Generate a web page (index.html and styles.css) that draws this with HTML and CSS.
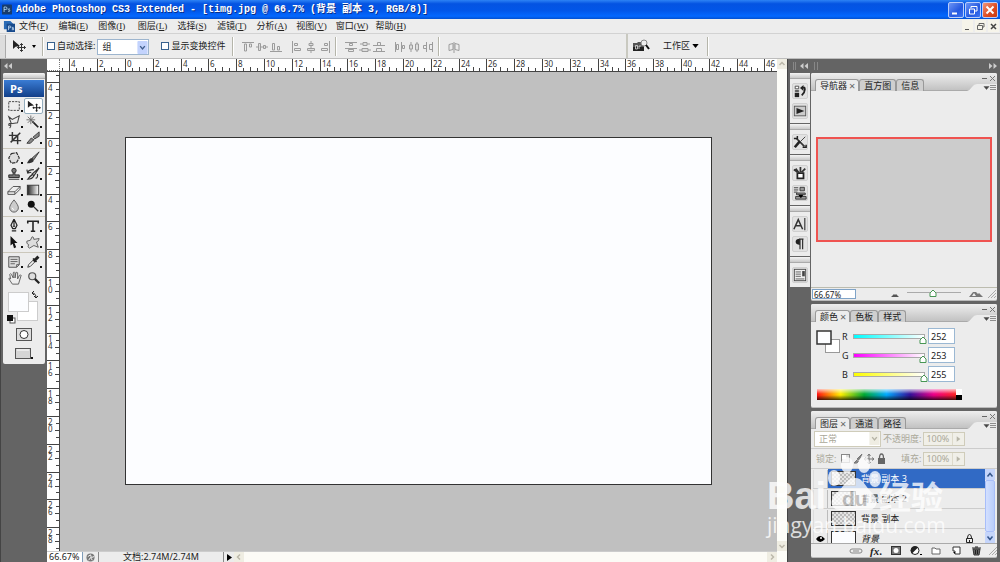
FILE: index.html
```html
<!DOCTYPE html>
<html lang="zh-CN">
<head>
<meta charset="utf-8">
<title>Adobe Photoshop CS3 Extended</title>
<link rel="stylesheet" href="styles.css">
</head>
<body>
<header class="titlebar">
  <svg class="app-icon" viewBox="0 0 12 12"><rect width="12" height="12" rx="1" fill="#173c6d"/><path d="M2.500 9V3h2q1.500 0 1.500 1.500T4.500 6h-2M9.500 5.500q-2-.8-2 .4c0 1 2 .6 2 1.700q0 1-2.200.5" fill="none" stroke="#b9dcf5"/></svg>
  <h1 class="title">Adobe Photoshop CS3 Extended - [timg.jpg @ 66.7% (背景 副本 3, RGB/8)]</h1>
  <div class="win-buttons">
    <button class="win-btn" aria-label="最小化"><svg viewBox="0 0 14 14"><path d="M3 10.500h5" stroke="#fff" stroke-width="2"/></svg></button>
    <button class="win-btn" aria-label="还原"><svg viewBox="0 0 14 14"><path d="M5 5V3.500h6V8H9M3.500 6h5v5h-5zM5 3.500h6" fill="none" stroke="#fff"/></svg></button>
    <button class="win-btn close" aria-label="关闭"><svg viewBox="0 0 14 14"><path d="M3.500 3.500l7 7m0-7l-7 7" stroke="#fff" stroke-width="2"/></svg></button>
  </div>
</header>
<nav class="menubar">
  <svg class="doc-icon" viewBox="0 0 13 13"><path d="M1 1h7l3 3v6H1z" fill="#2b6bb5"/><rect x="4" y="4" width="9" height="9" fill="#174a8c"/><path d="M6 11V6.500h1.500q1 0 1 1t-1 1H6M11.500 8h-1.500v1.200h1.500v1.300h-2" fill="none" stroke="#d5eaff" stroke-width=".8"/></svg>
  <div class="menus">
    <button>文件(<u>F</u>)</button><button>编辑(<u>E</u>)</button><button>图像(<u>I</u>)</button><button>图层(<u>L</u>)</button><button>选择(<u>S</u>)</button><button>滤镜(<u>T</u>)</button><button>分析(<u>A</u>)</button><button>视图(<u>V</u>)</button><button>窗口(<u>W</u>)</button><button>帮助(<u>H</u>)</button>
  </div>
  <div class="doc-buttons">
    <button aria-label="最小化文档"><svg viewBox="0 0 11 11"><path d="M3 8.500h4" stroke="#555"/></svg></button>
    <button aria-label="还原文档"><svg viewBox="0 0 11 11"><path d="M4 4V2.500h5V6H7.500M2.500 4.500h5v4h-5z" fill="none" stroke="#666"/></svg></button>
    <button aria-label="关闭文档"><svg viewBox="0 0 11 11"><path d="M3 3l5 5m0-5L3 8" stroke="#444" stroke-width="1.500"/></svg></button>
  </div>
</nav>
<div class="options">
  <span class="opt-grip"></span>
  <button class="opt-tool" aria-label="移动工具"><svg width="26" height="16" viewBox="0 0 26 16"><path d="M2 2v9l2.500-2.300L9 8z" fill="#222"/><path d="M10.500 5.500v8M6.500 9.500h8M9 7l1.500-1.500L12 7M9 12l1.500 1.500L12 12M8 8L6.500 9.500 8 11M13 8l1.500 1.500L13 11" fill="none" stroke="#333"/><path d="M21 7h4l-2 3z"/></svg></button>
  <span class="opt-sep"></span>
  <label class="check"><input type="checkbox">自动选择:</label>
  <span class="select-box group-select"><select aria-label="自动选择"><option>组</option><option>图层</option></select><svg viewBox="0 0 11 14"><rect width="11" height="14" rx="1" fill="#c3d3fd"/><path d="M3 5.500l2.500 3 2.500-3" fill="none" stroke="#3f5d8c" stroke-width="1.500"/></svg></span>
  <label class="check show-check"><input type="checkbox">显示变换控件</label>
  <span class="opt-sep"></span>
  <div class="align-set">
    <button aria-label="顶对齐"><svg viewBox="0 0 12 12"><path d="M0 1.500h12"/><path d="M2.500 3v7h2V3zM7.500 3v3h2V3z"/></svg></button>
    <button aria-label="垂直居中对齐"><svg viewBox="0 0 12 12"><path d="M0 6h12"/><path d="M2.500 2.500h2v7h-2zM7.500 4.500h2v3h-2z" fill="#ddd"/></svg></button>
    <button aria-label="底对齐"><svg viewBox="0 0 12 12"><path d="M0 10.500h12M2.500 2.500h2V9h-2zM7.500 5.500h2V9h-2z"/></svg></button>
  </div>
  <div class="align-set">
    <button aria-label="左对齐"><svg viewBox="0 0 12 12"><path d="M1.500 0v12M3.500 2.500h3v2h-3zM3.500 7.500h6v2h-6z"/></svg></button>
    <button aria-label="水平居中对齐"><svg viewBox="0 0 12 12"><path d="M6 0v12"/><path d="M4 2.500h4v2H4zM2.500 7.500h7v2h-7z" fill="#ddd"/></svg></button>
    <button aria-label="右对齐"><svg viewBox="0 0 12 12"><path d="M10.500 0v12M5.500 2.500h3v2h-3zM2.500 7.500h6v2h-6z"/></svg></button>
  </div>
  <span class="opt-sep"></span>
  <div class="align-set">
    <button aria-label="按顶分布"><svg viewBox="0 0 12 12"><path d="M0 1.500h12M0 7.500h12M4.500 2.500h3v2h-3zM3.500 8.500h5v2h-5z"/></svg></button>
    <button aria-label="垂直居中分布"><svg viewBox="0 0 12 12"><path d="M1 3h10M0 9h12"/><path d="M4 1.500h4v3H4zM3 7.500h6v3H3z" fill="#ddd"/></svg></button>
    <button aria-label="按底分布"><svg viewBox="0 0 12 12"><path d="M0 4.500h12M0 10.500h12M4.500 1.500h3v3h-3zM3.500 7.500h5v3h-5z"/></svg></button>
  </div>
  <div class="align-set">
    <button aria-label="按左分布"><svg viewBox="0 0 12 12"><path d="M1.500 1v10M7.500 1v10M2.500 3.500h2v5h-2zM8.500 4.500h2v3h-2z"/></svg></button>
    <button aria-label="水平居中分布"><svg viewBox="0 0 12 12"><path d="M3 1v10M9 1v10"/><path d="M1.500 4h3v4h-3zM7.500 3h3v6h-3z" fill="#ddd"/></svg></button>
    <button aria-label="按右分布"><svg viewBox="0 0 12 12"><path d="M4.500 1v10M10.500 1v10M1.500 4.500h3v3h-3zM7.500 3.500h3v5h-3z"/></svg></button>
  </div>
  <span class="opt-sep"></span>
  <div class="align-set">
    <button aria-label="自动对齐图层"><svg viewBox="0 0 12 12"><path d="M6 1v11M1 3.500l4-1v6l-4 1zM11 3.500l-4-1v6l4 1z"/></svg></button>
  </div>
  <div class="workspace">
    <button aria-label="转到 Bridge"><svg width="18" height="14" viewBox="0 0 18 14"><path d="M1 4h4l1-1h6v9H1z" fill="#555"/><path d="M1 8h11v4H1z" fill="#222"/><path d="M3.500 10V6.500h2v3.500zM7 10V7h2" fill="none" stroke="#ddd" stroke-width=".8"/><circle cx="12" cy="4" r="3" fill="#eee" stroke="#888"/><path d="M14 6l3 4" stroke="#111" stroke-width="2"/></svg></button>
    <button class="ws-menu">工作区 <svg width="7" height="4" viewBox="0 0 8 5"><path d="M0 0h8L4 5z"/></svg></button>
  </div>
  <span class="opt-sep"></span>
</div>

<main class="work">
  <aside class="left-dock">
    <div class="dock-top"><svg width="8" height="6" viewBox="0 0 8 6"><path d="M3.500 0v6L0 3zM8 0v6L4.500 3z" fill="#ccc"/></svg></div>
    <div class="tools">
      <div class="grip"></div>
      <div class="ps-logo">Ps</div>
      <div class="tool-group">
        <button class="more" aria-label="矩形选框"><svg viewBox="0 0 16 16"><rect x="2" y="3" width="12" height="10" fill="none" stroke="#333" stroke-dasharray="2.500 1.200"/></svg></button>
        <button class="active" aria-label="移动"><svg viewBox="0 0 16 16"><path d="M1 2v8l2.500-2L8 7.500z" fill="#222"/><path d="M11 6v8M7 10h8M10 7l1-1 1 1M10 13l1 1 1-1M8 9l-1 1 1 1M14 9l1 1-1 1" fill="none" stroke="#222" stroke-width="1.300"/></svg></button>
        <button class="more" aria-label="套索"><svg viewBox="0 0 16 16"><path d="M2 2l4 3 8-4-2 8-7 1zM5 10q-3-1-3 1t2 0q1 2-1 4" fill="none" stroke="#444" stroke-width="1.200"/></svg></button>
        <button class="more" aria-label="魔棒"><svg viewBox="0 0 16 16"><path d="M7 7l7 7" stroke="#222" stroke-width="2"/><path d="M5.500 .5v10M.5 5.500h10M2 2l7 7M9 2L2 9" stroke="#666"/></svg></button>
        <button aria-label="裁剪"><svg viewBox="0 0 16 16"><path d="M5 1v10h10M1 5h10v10M3 13L14 2" fill="none" stroke="#333" stroke-width="1.700"/></svg></button>
        <button class="more" aria-label="切片"><svg viewBox="0 0 16 16"><path d="M1 14l5-6 3 2-4 4zM8 7l7-6v5L10 9z" fill="#888" stroke="#333"/></svg></button>
      </div>
      <div class="tool-group">
        <button class="more" aria-label="修补"><svg viewBox="0 0 16 16"><path d="M5 3l6-1 3 6-3 5-6 1-3-6z" fill="#ddd" stroke="#333" stroke-width="1.300" stroke-dasharray="4 1"/></svg></button>
        <button class="more" aria-label="画笔"><svg viewBox="0 0 16 16"><path d="M15 1L7 8l2 2z" fill="#888" stroke="#333"/><path d="M7 8q-3 0-6 6 6 0 8-3z" fill="#333"/></svg></button>
        <button class="more" aria-label="图章"><svg viewBox="0 0 16 16"><circle cx="8" cy="4" r="2.500" fill="#777" stroke="#222"/><path d="M7 6v3H2v3h12V9H9V6M2 14h12" fill="#777" stroke="#222"/></svg></button>
        <button class="more" aria-label="历史画笔"><svg viewBox="0 0 16 16"><path d="M15 1L7 8l2 2zM7 9q-2 1-5 5 5 0 7-4M2 7q0-4 7-4M1 3l1 4 4-1M11 13q3-1 2-5" fill="none" stroke="#333" stroke-width="1.400"/></svg></button>
        <button class="more" aria-label="橡皮擦"><svg viewBox="0 0 16 16"><path d="M1 10l6-6h8l-6 6zM1 10v3h8l6-6V4M9 10v3" fill="#eee" stroke="#444"/></svg></button>
        <button class="more" aria-label="渐变"><svg viewBox="0 0 16 16"><defs><linearGradient id="tone"><stop stop-color="#222"/><stop offset="1" stop-color="#fff"/></linearGradient></defs><rect x="1.500" y="2.500" width="13" height="11" fill="url(#tone)" stroke="#333"/></svg></button>
        <button class="more" aria-label="模糊"><svg viewBox="0 0 16 16"><path d="M8 1q-5 6-5 9a5 5 0 0010 0q0-3-5-9z" fill="#ccc" stroke="#555"/><path d="M6 10q0 2 2 2" stroke="#fff" fill="none"/></svg></button>
        <button class="more" aria-label="减淡"><svg viewBox="0 0 16 16"><circle cx="6" cy="6" r="4" fill="#111"/><path d="M9 9l5 5" stroke="#333" stroke-width="1.500"/></svg></button>
      </div>
      <div class="tool-group">
        <button class="more" aria-label="钢笔"><svg viewBox="0 0 16 16"><path d="M8 0L4.500 7l2 4h3l2-4zM8 1v6M5.500 13.500h5" fill="#ddd" stroke="#222" stroke-width="1.300"/><circle cx="8" cy="8" r="1"/></svg></button>
        <button class="more" aria-label="文字"><svg viewBox="0 0 16 16"><path d="M2 5V2.500h12V5M8 2v12M5.500 14h5" fill="none" stroke="#222" stroke-width="1.800"/></svg></button>
        <button class="more" aria-label="路径选择"><svg viewBox="0 0 16 16"><path d="M4 1v11l2.500-2L8 15l2.500-1-2-5H12z" fill="#111"/></svg></button>
        <button class="more" aria-label="形状"><svg viewBox="0 0 16 16"><path d="M5 6l2-4q2 0 2 3l6-1q0 3-3 4l2 6-5-2-5 3q-3-1-1-4-3-1-2-4z" fill="#ddd" stroke="#555"/></svg></button>
      </div>
      <div class="tool-group">
        <button class="more" aria-label="注释"><svg viewBox="0 0 16 16"><path d="M2 2h12v9l-3 3H2z" fill="#ddd" stroke="#444"/><path d="M4 5h8M4 7.500h8M4 10h5M14 11h-3v3" fill="none" stroke="#555"/></svg></button>
        <button class="more" aria-label="吸管"><svg viewBox="0 0 16 16"><path d="M2 14l1-3 5-5 2 2-5 5z" fill="#eee" stroke="#333"/><path d="M8 4l4 4M9 6l4-4 1 1-4 4z" stroke="#222" stroke-width="2"/></svg></button>
        <button aria-label="抓手"><svg viewBox="0 0 16 16"><path d="M5 15L1 9q0-2 2 0L2 4q1-2 2 0l2 4V2q1-2 2 0v6l1-6q1-1 2 0v7l2-4q2-1 2 0l-3 10z" fill="#eee" stroke="#555"/></svg></button>
        <button aria-label="缩放"><svg viewBox="0 0 16 16"><circle cx="6" cy="6" r="4" fill="#ddd" stroke="#555" stroke-width="1.400"/><path d="M9 9l5 5" stroke="#222" stroke-width="2.500"/></svg></button>
      </div>
      <svg class="swatches" viewBox="0 0 41 36"><rect x="14.500" y="13.500" width="20" height="19" fill="#fff" stroke="#ccc"/><rect x="5.500" y="4.500" width="20" height="19" fill="#fcfdff" stroke="#ccc"/><path d="M29 5q4 0 4 5M31 3l-2 2 2 2M31 8l2 2 2-2" fill="none" stroke="#222"/><rect x="7" y="30" width="5" height="5" fill="#fff" stroke="#555"/><rect x="4" y="27" width="6" height="6" fill="#111"/></svg>
      <div class="mask-row"><button aria-label="快速蒙版"><svg width="16" height="13" viewBox="0 0 16 13"><rect x=".5" y=".5" width="15" height="12" fill="#ddd" stroke="#555"/><circle cx="8" cy="6.500" r="4" fill="#fff" stroke="#333"/></svg></button></div>
      <div class="mask-row"><button class="more" aria-label="屏幕模式"><svg width="16" height="13" viewBox="0 0 16 13"><rect x=".5" y="1.500" width="15" height="10" fill="#d5d5d5" stroke="#555"/><path d="M2 3h12" stroke="#fff"/></svg></button></div>
    </div>
  </aside>

  <section class="document">
    <div class="ruler-row">
      <span class="ruler-corner"></span>
      <svg class="ruler-h" id="ruler-h"></svg>
    </div>
    <div class="doc-mid">
      <svg class="ruler-v" id="ruler-v"></svg>
      <div class="pasteboard"><div class="canvas"></div></div>
    </div>
    <div class="statusbar">
      <input class="zoom" aria-label="缩放比例" value="66.67%">
      <button class="status-icon" aria-label="Version Cue"><svg viewBox="0 0 10 10"><circle cx="5" cy="5" r="4.500" fill="#777"/><path d="M2 4l3-2 1 3 3-1M3 8l2-3 2 3" stroke="#fff" fill="none"/></svg></button>
      <span class="docsize">文档:2.74M/2.74M</span>
      <button class="status-more" aria-label="状态选项"><svg width="5" height="7" viewBox="0 0 5 7"><path d="M0 0l5 3.500L0 7z"/></svg></button>
      <div class="hscroll"><button aria-label="向左"><svg viewBox="0 0 10 10"><path d="M6 2.500L3.500 5 6 7.500"/></svg></button><button aria-label="向右"><svg viewBox="0 0 10 10"><path d="M4 2.500L6.500 5 4 7.500"/></svg></button></div>
    </div>
  </section>
  <div class="vscroll"><button aria-label="向上"><svg viewBox="0 0 10 10"><path d="M2.500 6L5 3.500 7.500 6"/></svg></button><button aria-label="向下"><svg viewBox="0 0 10 10"><path d="M2.500 4L5 6.500 7.500 4"/></svg></button></div>

  <aside class="icon-dock">
    <div class="dock-top"><i class="handle"></i><svg width="8" height="6" viewBox="0 0 8 6"><path d="M3.500 0v6L0 3zM8 0v6L4.500 3z" fill="#ccc"/></svg></div>
    <div class="icon-group"><div class="grip"></div>
      <button aria-label="历史记录"><svg viewBox="0 0 16 16"><path d="M2.500 2.500h4v3h-4zM2.500 7.500h4v1h-4z" fill="#fff" stroke="#444"/><path d="M2 10h5v5H2z" fill="#222"/><path d="M10 4h3q2 4-3 9" fill="none" stroke="#222" stroke-width="2"/><path d="M8 4.500L12 1v7z" fill="#222"/></svg></button>
      <button aria-label="动作"><svg viewBox="0 0 16 16"><rect x="1.500" y="2.500" width="13" height="11" fill="#ccc" stroke="#555"/><path d="M4 4.500L13 8l-9 3.500z" fill="#222"/></svg></button></div>
    <div class="icon-group"><div class="grip"></div>
      <button aria-label="工具预设"><svg viewBox="0 0 16 16"><path d="M4 4l9 9" stroke="#333" stroke-width="2"/><path d="M14 2L9 7" stroke="#333"/><path d="M8 7l-6 7" stroke="#222" stroke-width="3"/><path d="M1 4h4V1M11 14h4v-3" fill="none" stroke="#222" stroke-width="1.700"/></svg></button></div>
    <div class="icon-group"><div class="grip"></div>
      <button aria-label="画笔"><svg viewBox="0 0 16 16"><path d="M5 8h7v6H5z" fill="#fff" stroke="#222" stroke-width="2"/><path d="M7 8L3 3M8.500 7V1M10 7l4-4M1 4l4 3" stroke="#333" stroke-width="2"/></svg></button>
      <button aria-label="仿制源"><svg viewBox="0 0 16 16"><path d="M1 2h5M1 4.500h5M1 7h4M8 1.500h5v4H8zM4 8h10v2H4zM3 12h12v3H3z" fill="#999" stroke="#333"/><path d="M6 10h6l-3 4z"/></svg></button></div>
    <div class="icon-group"><div class="grip"></div>
      <button aria-label="字符"><svg viewBox="0 0 16 16"><path d="M1 14L6 3l5 11M3 10h6" fill="none" stroke="#333" stroke-width="1.700"/><path d="M13.500 1v14" stroke="#333" stroke-width="1.300"/></svg></button>
      <button aria-label="段落"><svg viewBox="0 0 16 16"><path d="M8 2q-5 0-5 3.500T8 9z" fill="#222"/><path d="M8 2v12M11 2v12M7 2.500h5" stroke="#333" stroke-width="1.400"/></svg></button></div>
    <div class="icon-group"><div class="grip"></div>
      <button aria-label="图层复合"><svg viewBox="0 0 16 16"><rect x="1.500" y="1.500" width="13" height="13" fill="#eee" stroke="#444"/><path d="M3 4.500h6M3 7h6M3 9.500h6M3 12.500h10" stroke="#555"/><path d="M10.500 3.500h3v6h-3z" fill="#444"/></svg></button></div>
  </aside>

  <aside class="panels">
    <div class="dock-top"><i class="handle"></i><svg width="8" height="6" viewBox="0 0 8 6"><path d="M0 0v6l3.500-3zM4.500 0v6L8 3z" fill="#ccc"/></svg></div>
    <section class="panel navigator">
      <div class="panel-head"><div class="tabs"><button class="tab on">导航器<span class="x">×</span></button><button class="tab">直方图</button><button class="tab">信息</button></div>
        <svg class="panel-ctl" viewBox="0 0 34 18"><path d="M19 5.500h5" stroke="#666"/><path d="M27 3l5 5m0-5l-5 5" stroke="#777"/><path d="M4 18q3-1 5-4t5-3h20v7z" fill="#ececec"/><path d="M21 13.500h5l-2.500 3zM27 12.500h6M27 14.500h6M27 16.500h6" fill="#444" stroke="#666" stroke-width=".7"/></svg></div>
      <div class="nav-body"><div class="nav-view"></div></div>
      <div class="nav-foot">
        <input class="nav-zoom" aria-label="导航器缩放" value="66.67%">
        <svg width="8" height="5" viewBox="0 0 8 5"><path d="M0 5l3-3 1 1 1-1 3 3z" fill="#555"/></svg>
        <input class="nav-range" type="range" min="0" max="100" value="47" aria-label="缩放滑块">
        <svg width="14" height="6" viewBox="0 0 14 6"><path d="M0 6l4-5h3l2 2 1-1 4 4z" fill="#777"/><path d="M3 5l2-3 2 3" fill="#eee"/></svg>
        <svg class="resizer" width="8" height="8" viewBox="0 0 8 8"><path d="M0 8l8-8M3 8l5-5M6 8l2-2" stroke="#aaa"/></svg>
      </div>
    </section>
    <section class="panel color">
      <div class="panel-head"><div class="tabs"><button class="tab on">颜色<span class="x">×</span></button><button class="tab">色板</button><button class="tab">样式</button></div>
        <svg class="panel-ctl" viewBox="0 0 34 18"><path d="M19 5.500h5" stroke="#666"/><path d="M27 3l5 5m0-5l-5 5" stroke="#777"/><path d="M4 18q3-1 5-4t5-3h20v7z" fill="#ececec"/><path d="M21 13.500h5l-2.500 3zM27 12.500h6M27 14.500h6M27 16.500h6" fill="#444" stroke="#666" stroke-width=".7"/></svg></div>
      <div class="color-body">
        <svg class="fg-bg" viewBox="0 0 26 26"><rect x="9.500" y="11.500" width="14" height="13" fill="#fff" stroke="#999"/><rect x="1" y="3" width="14" height="13" fill="#fcfdff" stroke="#333" stroke-width="1.500"/></svg>
        <div class="channels">
          <div class="channel"><label for="r">R</label><input id="r" class="range-r" type="range" max="255" value="252"><input aria-label="R 数值" class="num" value="252"></div>
          <div class="channel"><label for="g">G</label><input id="g" class="range-g" type="range" max="255" value="253"><input aria-label="G 数值" class="num" value="253"></div>
          <div class="channel"><label for="b">B</label><input id="b" class="range-b" type="range" max="255" value="255"><input aria-label="B 数值" class="num" value="255"></div>
        </div>
      </div>
      <div class="spectrum"><span class="rainbow"></span><span class="bw"></span></div>
    </section>
    <section class="panel layers">
      <div class="panel-head"><div class="tabs"><button class="tab on">图层<span class="x">×</span></button><button class="tab">通道</button><button class="tab">路径</button></div>
        <svg class="panel-ctl" viewBox="0 0 34 18"><path d="M19 5.500h5" stroke="#666"/><path d="M27 3l5 5m0-5l-5 5" stroke="#777"/><path d="M4 18q3-1 5-4t5-3h20v7z" fill="#ececec"/><path d="M21 13.500h5l-2.500 3zM27 12.500h6M27 14.500h6M27 16.500h6" fill="#444" stroke="#666" stroke-width=".7"/></svg></div>
      <div class="layer-opts">
        <span class="select-box mode-select"><select aria-label="混合模式" disabled><option>正常</option></select><svg viewBox="0 0 11 14"><rect width="11" height="14" fill="#efede3"/><path d="M3 5.500l2.500 3 2.500-3" fill="none" stroke="#b5b3a5" stroke-width="1.500"/></svg></span>
        <label for="opacity">不透明度:</label>
        <span class="pct"><input id="opacity" value="100%" disabled><svg viewBox="0 0 12 12"><path d="M4 3l4 3-4 3z" fill="#b8b6a8"/></svg></span>
      </div>
      <div class="layer-opts">
        <span class="lock-label">锁定:</span>
        <svg class="locks" viewBox="0 0 48 12"><rect x="1.500" y="1.500" width="8" height="8" fill="#ddd" stroke="#888"/><path d="M2 2h4v4H2z" fill="#fff"/><path d="M22 1l-5 5 2 1zM17 7l-3 3q3 1 5-2" fill="#888" stroke="#777"/><path d="M29 1v10M24 6h10M27.500 3L29 1l1.500 2M27.500 9l1.500 2 1.500-2M26 4.500L24 6l2 1.500M32 4.500L34 6l-2 1.500" fill="none" stroke="#777"/><rect x="38" y="5" width="7" height="6" fill="#666"/><path d="M39.500 5q0-4 2-4t2 4" fill="none" stroke="#666" stroke-width="1.300"/></svg>
        <label for="fill">填充:</label>
        <span class="pct"><input id="fill" value="100%" disabled><svg viewBox="0 0 12 12"><path d="M4 3l4 3-4 3z" fill="#b8b6a8"/></svg></span>
      </div>
      <div class="layer-area">
        <ul class="layer-list">
          <li class="layer selected"><span class="eye"></span><span class="thumb"></span><span class="name">背景 副本 3</span></li>
          <li class="layer"><span class="eye"></span><span class="thumb"></span><span class="name">背景 副本 2</span></li>
          <li class="layer"><span class="eye"></span><span class="thumb"></span><span class="name">背景 副本</span></li>
          <li class="layer base"><span class="eye"><svg width="9" height="8" viewBox="0 0 9 8"><path d="M0 4q4-6 9 0-5 6-9 0zM1 2L0 0M4 1V0M8 2l1-2"/><circle cx="5" cy="3" r="1" fill="#fff"/></svg></span><span class="thumb plain"></span><em class="name">背景</em><svg class="lock" width="7" height="9" viewBox="0 0 7 9"><path d="M.5 4.500h6v4h-6zM1.500 4q0-3.500 2-3.500t2 3.500M3.500 6v2" fill="none" stroke="#222"/></svg></li>
        </ul>
        <div class="layer-scroll"><button aria-label="上滚"><svg viewBox="0 0 10 10"><path d="M2.500 6.500l2.500-3 2.500 3"/></svg></button><span class="bar"></span><button aria-label="下滚"><svg viewBox="0 0 10 10"><path d="M2.500 3.500l2.500 3 2.500-3"/></svg></button></div>
      </div>
      <div class="layer-foot">
        <button aria-label="链接"><svg viewBox="0 0 14 10"><path d="M7 3H3q-2 0-2 2t2 2h4M7 3h4q2 0 2 2t-2 2H7M4 5h6" fill="none" stroke="#888"/></svg></button>
        <button class="fx" aria-label="图层样式"><i>fx</i>.</button>
        <button aria-label="蒙版"><svg viewBox="0 0 14 10"><rect x="2.500" y=".5" width="9" height="8" fill="#777" stroke="#333"/><circle cx="7" cy="4.500" r="2.500" fill="#fff"/></svg></button>
        <button aria-label="调整图层"><svg viewBox="0 0 14 10"><circle cx="6" cy="4.500" r="4" fill="#fff" stroke="#222"/><path d="M3 7.500a4 4 0 016-6z" fill="#222"/><path d="M11 8h2v1h-2z"/></svg></button>
        <button aria-label="新建组"><svg viewBox="0 0 14 10"><path d="M3 2h3l1 1h4v5H3z" fill="#fff" stroke="#666"/></svg></button>
        <button aria-label="新建图层"><svg viewBox="0 0 14 10"><path d="M4 1h7v7H6V5H4z" fill="#fff" stroke="#333"/><path d="M4 6l2 2V6z"/></svg></button>
        <button aria-label="删除"><svg viewBox="0 0 14 10"><path d="M4 3h7l-1 6H5z" fill="#666" stroke="#333"/><path d="M3 2h9M6 1h3M6.500 4v4M8.500 4v4" stroke="#222"/></svg></button>
        <svg class="resizer" width="8" height="8" viewBox="0 0 8 8"><path d="M0 8l8-8M3 8l5-5M6 8l2-2" stroke="#aaa"/></svg>
      </div>
    </section>
  </aside>
</main>
<div class="watermark">
  <svg viewBox="0 0 180 90">
    <g fill="#fff">
      <text x="0" y="54" class="wm-brand">Bai</text>
      <text x="112" y="54" class="wm-cn">经验</text>
      <ellipse cx="67" cy="23" rx="6" ry="8"/><ellipse cx="80" cy="10" rx="6" ry="8"/><ellipse cx="97" cy="10" rx="6" ry="8"/><ellipse cx="108" cy="24" rx="6" ry="8"/>
      <path d="M88 23c8 0 10 8 17 15 8 7 5 17-4 17H73c-9 0-12-10-3-17 7-7 10-15 18-15z"/>
      <text x="0" y="78" class="wm-url">jingyan.baidu.com</text>
    </g>
    <text x="75" y="51" class="wm-du">du</text>
  </svg>
</div>
<script src="rulers.js"></script>
</body>
</html>
```
FILE: styles.css
```css
* { box-sizing: border-box; }
body {
  margin: 0; height: 100vh; display: flex; flex-direction: column; overflow: hidden;
  background: #646464; color: #222;
  font: 9px/12px "Noto Sans", "Noto Sans CJK SC", sans-serif;
}
button, input, select { font: inherit; color: inherit; margin: 0; padding: 0; border: 0; background: none; border-radius: 0; min-width: 0; }
button { display: flex; align-items: center; justify-content: center; white-space: nowrap; }
svg { display: block; flex: none; }

.titlebar { display: flex; align-items: center; gap: 4px; height: 19px; flex: none; padding: 0 2px; background: linear-gradient(#2d83f5, #0453e2 20%, #0256e8 55%, #0368ff 85%, #0350d0); }
.app-icon { width: 10px; height: 11px; }
.title { margin: 0; flex: 1; color: #fff; font: bold 10px/18px "Liberation Mono", "Noto Sans CJK SC", monospace; text-shadow: 1px 1px #0a2f8a; white-space: nowrap; }
.win-buttons { display: flex; gap: 1px; }
.win-btn { width: 16px; height: 16px; border: 1px solid #b9cdfb; border-radius: 2px; background: linear-gradient(135deg, #6c94f5, #2458e0 60%, #3c74f2); }
.win-btn svg { width: 14px; height: 14px; }
.win-btn.close { background: linear-gradient(135deg, #f0967c, #dc4a20 60%, #c93c12); }

.menubar { display: flex; align-items: center; height: 15px; flex: none; padding-left: 3px; background: #ededed; border-bottom: 1px solid #d2d2d2; }
.doc-icon { width: 12px; height: 12px; }
.menus { display: grid; grid-template-columns: repeat(10, 1fr); width: 396px; margin-left: 4px; }
.menus button { justify-content: start; font-family: "Liberation Serif", "Noto Sans CJK SC", serif; line-height: 13px; }
.doc-buttons { display: flex; gap: 2px; margin-left: auto; padding-right: 1px; }
.doc-buttons button { width: 11px; height: 12px; background: #f6f4ea; }
.doc-buttons svg { width: 11px; height: 11px; }

.options { display: flex; align-items: center; height: 25px; flex: none; background: #ececec; border-bottom: 1px solid #bdbdbd; }
.opt-grip { width: 6px; height: 23px; border-right: 1px solid #aaa; background: #ddd; }
.opt-tool { width: 36px; }
.opt-sep { width: 2px; height: 19px; border-left: 1px solid #b5b5aa; border-right: 1px solid #fff; }
.check { display: flex; align-items: center; gap: 2px; margin-left: 3px; white-space: nowrap; font-size: 9px; }
.check input { appearance: none; width: 8px; height: 8px; background: #fff; border: 1px solid #37618e; }
.select-box { display: grid; align-items: center; background: #fff; border: 1px solid #9db5ce; }
.select-box select, .select-box svg { grid-area: 1 / 1; }
.select-box select { appearance: none; width: 100%; padding-left: 4px; height: 14px; opacity: 1; }
.select-box svg { justify-self: end; width: 11px; height: 13px; pointer-events: none; }
.group-select { width: 52px; margin: 2px 0 0 2px; }
.show-check { margin: 0 7px 0 12px; }
.align-set { display: flex; gap: 2px; padding: 2px 4px 0 8px; }
.align-set + .align-set { padding-left: 5px; }
.align-set svg { width: 12px; height: 12px; fill: none; stroke: #9c9c9c; }
.workspace { display: flex; gap: 13px; align-items: center; align-self: stretch; margin-left: auto; padding: 0 8px 0 4px; border-left: 2px solid #c9c9c0; }
.workspace + .opt-sep { margin-right: 291px; }
.ws-menu { gap: 2px; }

.work { display: flex; flex: 1; min-height: 0; }
.dock-top { display: flex; align-items: center; gap: 4px; height: 14px; flex: none; padding: 0 4px; }
.grip { height: 6px; background: linear-gradient(#f5f5f5, #c8c8c8); border-bottom: 1px solid #aaa; }
.handle { width: 4px; height: 8px; border: solid #888; border-width: 0 1px; }

.left-dock { width: 47px; flex: none; padding: 0 2px; border-left: 1px solid #444; }
.left-dock .dock-top { padding: 0 1px; }
.tools { background: #ececec; border-radius: 2px; width: 42px; padding-bottom: 2px; overflow: hidden; }
.ps-logo { height: 17px; margin: 1px 1px 0; padding-left: 6px; color: #fff; font: bold 11px/17px "Open Sans", sans-serif; background: linear-gradient(#3a7cd4, #123f88); }
.tool-group { display: grid; grid-template-columns: 19px 19px; justify-content: center; padding: 1px 0 2px; border-bottom: 1px solid #cbc7bb; }
.tool-group:nth-child(6) { border: 0; }
.tool-group button { height: 16px; border-radius: 2px; border: 1px solid transparent; }
.tool-group svg { width: 14px; height: 14px; }
.tool-group .active { border-color: #94adbd; background: #fff; }
.more::after { content: ""; align-self: flex-end; width: 2px; height: 2px; margin: 0 0 1px 0; background: #111; }
.swatches { width: 41px; height: 36px; }
.mask-row { display: flex; justify-content: center; height: 18px; align-items: center; margin-top: 1px; }

.document { display: flex; flex-direction: column; flex: 1; min-width: 0; }
.ruler-row { display: flex; height: 13px; flex: none; background: #fff; border-bottom: 1px solid #444; }
.ruler-corner { width: 13px; flex: none; border-right: 1px dotted #777; border-bottom: 1px dotted #777; }
.ruler-h { flex: 1; height: 12px; min-width: 0; overflow: hidden; }
.doc-mid { display: flex; flex: 1; min-height: 0; }
.ruler-v { width: 13px; height: 100%; background: #fff; border-right: 1px solid #444; overflow: hidden; }
.ruler-h text, .ruler-v text { font: 8px "Noto Sans", sans-serif; fill: #333; }
.ruler-h line, .ruler-v line { stroke: #444; shape-rendering: crispEdges; }
.pasteboard { flex: 1; display: flex; padding: 65px 65px 66px; background: #c0c0c0; }
.canvas { flex: 1; background: #fcfdff; border: 1px solid #333; }
.statusbar { display: flex; height: 11px; flex: none; background: #ececec; border-top: 1px solid #ccc; line-height: 10px; }
.statusbar .zoom { width: 36px; padding-left: 2px; background: #fff; border-right: 1px solid #7f9db9; }
.status-icon { width: 15px; }
.status-icon svg { width: 9px; height: 9px; }
.docsize { width: 126px; border: solid #888; border-width: 0 1px; text-align: center; white-space: nowrap; }
.status-more { width: 10px; }
.hscroll { flex: 1; display: flex; justify-content: space-between; background: #fcfbf6; }
.hscroll button, .vscroll button { width: 10px; height: 10px; background: #efede2; }
.hscroll svg, .vscroll svg, .layer-scroll svg { width: 10px; height: 10px; fill: none; stroke: #bbb8aa; stroke-width: 1.5; }
.vscroll { width: 10px; flex: none; display: flex; flex-direction: column; justify-content: space-between; padding-bottom: 11px; background: #fdfdf8; }

.icon-dock { width: 24px; flex: none; padding-left: 2px; border-left: 1px solid #444; display: flex; flex-direction: column; gap: 1px; }
.icon-dock .dock-top { margin-bottom: -1px; padding: 0 3px; }
.icon-group { display: flex; flex-direction: column; align-items: center; gap: 4px; width: 20px; padding-bottom: 4px; background: #ececec; }
.icon-group .grip { align-self: stretch; }
.icon-group button { width: 16px; height: 16px; background: #e2e2e2; border: 1px solid #d0d0d0; border-radius: 2px; }
.icon-group svg { width: 14px; height: 14px; }

.panels { width: 189px; flex: none; padding-right: 3px; display: flex; flex-direction: column; }
.panels .dock-top { justify-content: space-between; padding: 0 0 0 3px; }
.panel { display: flex; flex-direction: column; flex: none; background: #ececec; border-bottom: 1px solid #bbb; border-radius: 2px; margin-bottom: 3px; overflow: hidden; }
.panel-head { display: flex; justify-content: space-between; align-items: flex-end; height: 18px; flex: none; background: linear-gradient(#eee, #c2c2c2); border-bottom: 1px solid #aaa; }
.tabs { display: flex; padding-left: 4px; margin-bottom: -1px; }
.tab { height: 12px; padding: 0 4px; border: 1px solid #999; border-bottom: 0; border-radius: 3px 3px 0 0; background: #cfcfcf; font-size: 9px; line-height: 11px; }
.tab.on { background: #ececec; padding-right: 3px; }
.x { padding-left: 2px; color: #666; font-size: 11px; }
.panel-ctl { width: 34px; height: 18px; margin-bottom: -1px; }
.navigator { height: 228px; }
.nav-body { flex: 1; display: flex; align-items: center; padding: 0 5px; border-bottom: 1px solid #bcbcaf; }
.nav-view { flex: 1; height: 105px; border: 2px solid #ef5350; background: #ccc; }
.nav-foot { display: flex; align-items: center; height: 12px; padding: 0 1px; }
.nav-zoom { width: 44px; height: 10px; background: #fff; border: 1px solid #7fa3c7; font-size: 8px; line-height: 8px; margin-right: 35px; padding-left: 1px; }
.nav-foot .nav-range { width: 54px; margin: 0 8px; }
.resizer { margin-left: auto; }
input[type="range"] { appearance: none; height: 12px; background: none; }
input[type="range"]::-webkit-slider-runnable-track { height: 5px; }
input[type="range"]::-webkit-slider-thumb { appearance: none; width: 8px; height: 8px; margin-top: -4px; background: url("data:image/svg+xml,%3Csvg xmlns='http://www.w3.org/2000/svg' viewBox='0 0 8 8'%3E%3Cpath d='M1 7.500V4l3-3 3 3v3.500z' fill='white' stroke='%23479653'/%3E%3C/svg%3E"); }
.nav-range::-webkit-slider-runnable-track { height: 2px; border-top: 1px solid #aaa; }

.color { height: 104px; }
.color-body { display: flex; padding: 6px 5px 0; }
.fg-bg { width: 26px; height: 26px; }
.channels { display: grid; gap: 3px; }
.channel { display: flex; align-items: center; height: 16px; }
.channel label { width: 11px; padding-top: 2px; }
.channel input[type="range"] { width: 75px; height: 16px; }
.channel input::-webkit-slider-thumb { margin-top: 2px; }
.range-r { --hue: #00fdff; }
.range-g { --hue: #fc00ff; }
.range-b { --hue: #fcfd00; }
.channel input::-webkit-slider-runnable-track { background: linear-gradient(90deg, var(--hue), #fff) 1px 1px / 70px 3px no-repeat, linear-gradient(#aaa, #aaa) 0 0 / 72px 5px no-repeat; }
.num { width: 27px; height: 16px; padding-left: 2px; background: #fff; border: 1px solid #9bb8d3; }
.spectrum { display: flex; width: 145px; height: 11px; margin: 7px 0 0 6px; }
.rainbow { flex: 1; background: linear-gradient(#fffb, #fff0 45%, #0000 55%, #000b), linear-gradient(90deg, #f11, #fe0 17%, #0a3 34%, #0af 50%, #319 67%, #e08 84%, #f22); }
.bw { width: 6px; background: linear-gradient(#fff 50%, #000 50%); }

.layers { margin-bottom: 0; }
.layer-opts { display: flex; align-items: center; height: 20px; padding: 0 3px; border-bottom: 1px solid #ccc; color: #aaa899; white-space: nowrap; }
.mode-select { width: 67px; border-color: #cfccba; margin-right: 2px; }
.layer-opts select:disabled { color: #aaa899; }
.layer-opts label { margin-right: 2px; }
.pct { display: flex; align-items: center; width: 42px; height: 14px; border: 1px solid #cfccba; background: #f0efe8; }
.pct input { width: 28px; height: 12px; padding-left: 2px; color: #aaa899; }
.pct svg { width: 12px; height: 12px; border-left: 1px solid #dddacb; }
.lock-label { width: 26px; padding-left: 2px; }
.locks { width: 48px; height: 12px; margin-right: 13px; }
.layer-area { display: flex; height: 75px; border-bottom: 1px solid #aaa; }
.layer-list { flex: 1; margin: 0; padding: 0 0 0 2px; list-style: none; overflow: hidden; }
.layer { display: flex; align-items: center; height: 20px; border-bottom: 1px solid #ccc; }
.eye { display: flex; align-items: center; justify-content: center; width: 15px; height: 18px; margin-right: 3px; border-right: 1px solid #bbb; border-left: 1px solid #ddd; }
.layer .thumb { width: 25px; height: 15px; border: 1px solid #333; background: repeating-conic-gradient(#bbb 0 25%, #e4e4e4 0 50%) 0 0 / 4px 4px; }
.layer .thumb.plain { background: #fcfdff; }
.layer .name { flex: 1; padding-left: 5px; font-size: 9px; }
.layer.selected { background: linear-gradient(90deg, #ececec 15px, #316ac5 15px); color: #fff; }
.base .lock { margin-right: 12px; }
.layer-scroll { display: flex; flex-direction: column; width: 10px; margin-right: 2px; }
.layer-scroll button { height: 11px; background: #c5d5fb; }
.layer-scroll svg { stroke: #36588c; }
.bar { flex: 1; border: 1px solid #a8befa; border-radius: 2px; background: linear-gradient(90deg, #d3e0ff, #b9cdfc); }
.layer-foot { display: flex; align-items: center; gap: 6px; height: 13px; padding-left: 38px; }
.layer-foot button { width: 14px; height: 10px; }
.layer-foot button svg { width: 14px; height: 10px; }
.fx { font: bold 11px/10px "Liberation Serif", serif; }

.watermark { position: absolute; right: 53px; bottom: 17px; width: 180px; height: 90px; opacity: .78; pointer-events: none; }
.watermark svg { width: 180px; height: 90px; overflow: visible; }
.wm-brand { font: bold 38px "Liberation Sans", sans-serif; }
.wm-cn { font: bold 32px "Noto Sans CJK SC", sans-serif; }
.wm-url { font: 21px "Open Sans", sans-serif; }
.wm-du { font: bold 21px "Liberation Sans", sans-serif; fill: #b4b4b4; }
```
FILE: rulers.js
```js
// Ruler scale: one labelled division every two centimetres.
const SVG_NS = "http://www.w3.org/2000/svg";
const DIVISION = 27.8;

function add(parent, tag, attrs, text) {
  const node = document.createElementNS(SVG_NS, tag);
  for (const key in attrs) node.setAttribute(key, attrs[key]);
  if (text !== undefined) node.textContent = text;
  parent.appendChild(node);
}

function drawRuler(svg, origin, vertical) {
  const length = vertical ? svg.clientHeight : svg.clientWidth;
  const depth = 12;
  for (let unit = -6; origin + (unit / 2) * DIVISION < length; unit += 2) {
    const start = origin + (unit / 2) * DIVISION;
    for (let part = 0; part < 4; part++) {
      const p = Math.round(start + (part * DIVISION) / 4) + 0.5;
      const size = part === 0 ? depth : part === 2 ? 4 : 3;
      add(svg, "line", vertical
        ? { x1: depth - size, x2: depth, y1: p, y2: p }
        : { x1: p, x2: p, y1: depth - size, y2: depth });
    }
    if (start < 0) continue;
    const label = String(Math.abs(unit));
    if (vertical) {
      [...label].forEach((digit, i) => add(svg, "text", { x: 1, y: Math.round(start) + 9 + i * 7 }, digit));
    } else {
      add(svg, "text", { x: Math.round(start) + 2, y: 8 }, label);
    }
  }
}

drawRuler(document.getElementById("ruler-h"), 65, false);
drawRuler(document.getElementById("ruler-v"), 66, true);
```
